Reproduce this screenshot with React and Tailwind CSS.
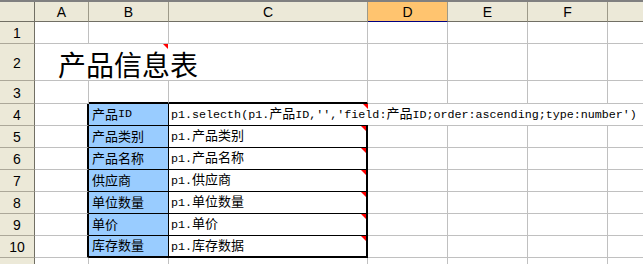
import React from "react";

const CJK = /([\u4e00-\u9fff]+)/;

// SimSun-ish mix: mono latin, slightly larger CJK
function Mixed({ text }) {
  return text.split(CJK).map((part, i) =>
    CJK.test(part) ? (
      <span key={i} className="text-[13px]">
        {part}
      </span>
    ) : (
      part
    )
  );
}

const R = {
  g: "border-r border-r-[#c0c0c0]",
  n: "border-r-0",
  k: "border-r border-r-black",
  K: "border-r-2 border-r-black",
};
const B = {
  g: "border-b border-b-[#c0c0c0]",
  k: "border-b border-b-black",
  K: "border-b-2 border-b-black",
};

function Corner() {
  return (
    <div className="absolute right-0 top-0 h-0 w-0 border-l-[5px] border-t-[5px] border-l-transparent border-t-[#ff0000]" />
  );
}

function RowNum({ n }) {
  return (
    <div className="flex w-[35px] shrink-0 items-center justify-center border-r border-b border-r-[#716f64] border-b-[#aca899] bg-[#ece9d8] pt-px font-['Liberation_Sans',sans-serif] text-[14px] text-black">
      {n}
    </div>
  );
}

const fields = [
  ["产品ID", "p1.selecth(p1.产品ID,'','field:产品ID;order:ascending;type:number')"],
  ["产品类别", "p1.产品类别"],
  ["产品名称", "p1.产品名称"],
  ["供应商", "p1.供应商"],
  ["单位数量", "p1.单位数量"],
  ["单价", "p1.单价"],
  ["库存数量", "p1.库存数据"],
];

function PlainRow({ n, h, bTop }) {
  return (
    <div className={`flex shrink-0 ${h}`}>
      <RowNum n={n} />
      <div className={`w-[54px] shrink-0 ${R.g} ${B.g}`} />
      <div className={`w-[80px] shrink-0 ${R.g} ${bTop ? B.K : B.g}`} />
      <div className={`w-[199px] shrink-0 ${R.g} ${bTop ? B.K : B.g}`} />
      <div className={`w-[80px] shrink-0 ${R.g} ${B.g}`} />
      <div className={`w-[80px] shrink-0 ${R.g} ${B.g}`} />
      <div className={`w-[80px] shrink-0 ${R.g} ${B.g}`} />
      <div className={`flex-1 ${B.g}`} />
    </div>
  );
}

function FieldRow({ n, label, expr, first, last }) {
  const rc = first ? R.n : R.K;
  const bb = last ? B.K : B.k;
  const rest = first ? R.n : R.g;
  return (
    <div className="flex h-[22px] shrink-0">
      <RowNum n={n} />
      <div className={`w-[54px] shrink-0 ${R.K} ${B.g}`} />
      <div
        className={`flex w-[80px] shrink-0 items-center bg-[#99ccff] pl-[3px] pt-px text-black ${R.k} ${bb}`}
      >
        <Mixed text={label} />
      </div>
      <div
        className={`relative flex w-[199px] shrink-0 items-center whitespace-nowrap pl-[2px] pt-px text-black ${rc} ${bb}`}
      >
        <span className="relative z-10">
          <Mixed text={expr} />
        </span>
        <Corner />
      </div>
      <div className={`w-[80px] shrink-0 ${rest} ${B.g}`} />
      <div className={`w-[80px] shrink-0 ${rest} ${B.g}`} />
      <div className={`w-[80px] shrink-0 ${rest} ${B.g}`} />
      <div className={`flex-1 ${B.g}`} />
    </div>
  );
}

export default function App() {
  const cols = [
    ["A", "w-[54px]"],
    ["B", "w-[80px]"],
    ["C", "w-[199px]"],
  ];
  return (
    <div className="flex h-[264px] w-[643px] flex-col overflow-hidden bg-white font-['Liberation_Mono','Noto_Sans_CJK_SC',monospace] text-[11.7px] leading-none">
      <div className="h-[2px] shrink-0 bg-[#808080]" />

      {/* column headers */}
      <div className="flex h-[20px] shrink-0 bg-[#ece9d8] font-['Liberation_Sans',sans-serif] text-[14px] text-black">
        <div className="w-[35px] shrink-0 border-r border-b border-r-[#716f64] border-b-[#716f64]" />
        {cols.map(([k, w]) => (
          <div
            key={k}
            className={`flex ${w} shrink-0 items-center justify-center border-r border-b border-r-[#9d9a89] border-b-[#716f64] pt-px`}
          >
            {k}
          </div>
        ))}
        <div className="flex w-[80px] shrink-0 items-center justify-center border-r border-b border-r-[#9d9a89] border-b-[#000080] bg-[#ffc46f] pt-px">
          D
        </div>
        <div className="flex w-[80px] shrink-0 items-center justify-center border-r border-b border-r-[#9d9a89] border-b-[#716f64] pt-px">
          E
        </div>
        <div className="flex w-[80px] shrink-0 items-center justify-center border-r border-b border-r-[#9d9a89] border-b-[#716f64] pt-px">
          F
        </div>
        <div className="flex-1 border-b border-b-[#716f64]" />
      </div>

      <PlainRow n={1} h="h-[22px]" />

      {/* title row */}
      <div className="flex h-[37px] shrink-0">
        <RowNum n={2} />
        <div className={`relative flex w-[333px] shrink-0 items-end pb-[2px] pl-[23px] ${R.g} ${B.g}`}>
          <span className="font-['Noto_Sans_CJK_SC',sans-serif] text-[28px] leading-none text-black">
            产品信息表
          </span>
          <div className="absolute left-[128px] top-0 h-0 w-0 border-l-[5px] border-t-[5px] border-l-transparent border-t-[#ff0000]" />
        </div>
        <div className={`w-[80px] shrink-0 ${R.g} ${B.g}`} />
        <div className={`w-[80px] shrink-0 ${R.g} ${B.g}`} />
        <div className={`w-[80px] shrink-0 ${R.g} ${B.g}`} />
        <div className={`flex-1 ${B.g}`} />
      </div>

      <PlainRow n={3} h="h-[23px]" bTop />

      {fields.map(([label, expr], i) => (
        <FieldRow
          key={label}
          n={i + 4}
          label={label}
          expr={expr}
          first={i === 0}
          last={i === fields.length - 1}
        />
      ))}

      {/* row 11 only peeks in at the bottom edge, its number is out of view */}
      <PlainRow n="" h="h-[22px]" />
    </div>
  );
}
